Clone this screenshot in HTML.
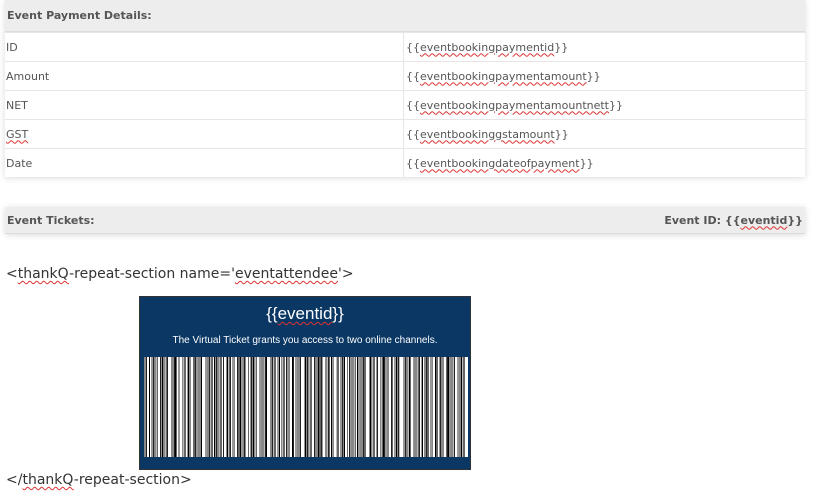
<!DOCTYPE html>
<html><head><meta charset="utf-8"><style>
body{margin:0;width:823px;height:499px;background:#fff;font-family:"DejaVu Sans","Liberation Sans",sans-serif;color:#444;overflow:hidden;position:relative}
.box{position:absolute;left:5px;width:800px;box-shadow:0 1px 6px rgba(0,0,0,.15)}
.hdr{background:#ededed;font-weight:bold;font-size:11px;color:#555;border-bottom:1px solid #ddd;box-sizing:border-box;padding:0 2px;display:flex;justify-content:space-between;align-items:center}
table{border-collapse:collapse;width:100%;font-size:11px;color:#555}
td{height:28px;border-top:1px solid #e6e6e6;padding:0 1px;width:400px}
td+td{border-left:1px solid #e6e6e6;padding-left:2px}
.sq{text-decoration:underline wavy #d33;text-decoration-thickness:1px;text-underline-offset:2px}
.big{position:absolute;left:6px;font-size:14px;color:#333;font-family:"DejaVu Sans",sans-serif}
.ticket{position:absolute;left:139px;top:296px;width:330px;height:172px;background:#0a3764;border:1px solid #333;font-family:"Liberation Sans",Arial,sans-serif;color:#fff;text-align:center}
.bc{position:absolute;left:4px;top:60px;width:324px;height:100px;background:
repeating-linear-gradient(90deg,transparent 0 5px,#000 5px 6px,transparent 6px 13px),
repeating-linear-gradient(90deg,transparent 0 3px,#fff 3px 5px,transparent 5px 11px),
repeating-linear-gradient(90deg,transparent 0 2px,#222 2px 3px,transparent 3px 7px),
repeating-linear-gradient(90deg,#888 0 3px,#bbb 3px 4px,#666 4px 6px,#fff 6px 7px,#999 7px 9px)}
</style></head><body>
<div class="box" style="top:0">
<div class="hdr" style="height:32px">Event Payment Details:</div>
<table>
<tr><td>ID</td><td>{{<span class="sq">eventbookingpaymentid</span>}}</td></tr>
<tr><td>Amount</td><td>{{<span class="sq">eventbookingpaymentamount</span>}}</td></tr>
<tr><td>NET</td><td>{{<span class="sq">eventbookingpaymentamountnett</span>}}</td></tr>
<tr><td><span class="sq">GST</span></td><td>{{<span class="sq">eventbookinggstamount</span>}}</td></tr>
<tr><td>Date</td><td>{{<span class="sq">eventbookingdateofpayment</span>}}</td></tr>
</table></div>
<div class="box" style="top:207px"><div class="hdr" style="height:27px"><span>Event Tickets:</span><span>Event ID: {{<span class="sq">eventid</span>}}</span></div></div>
<div class="big" style="top:266px">&lt;<span class="sq">thankQ</span>-repeat-section name='<span class="sq">eventattendee</span>'&gt;</div>
<div class="ticket">
<div style="font-size:17px;margin-top:7px">{{<span class="sq">eventid</span>}}</div>
<div style="font-size:10px;margin-top:11px">The Virtual Ticket grants you access to two online channels.</div>
<div class="bc"></div>
</div>
<div class="big" style="top:472px">&lt;/<span class="sq">thankQ</span>-repeat-section&gt;</div>
</body></html>
